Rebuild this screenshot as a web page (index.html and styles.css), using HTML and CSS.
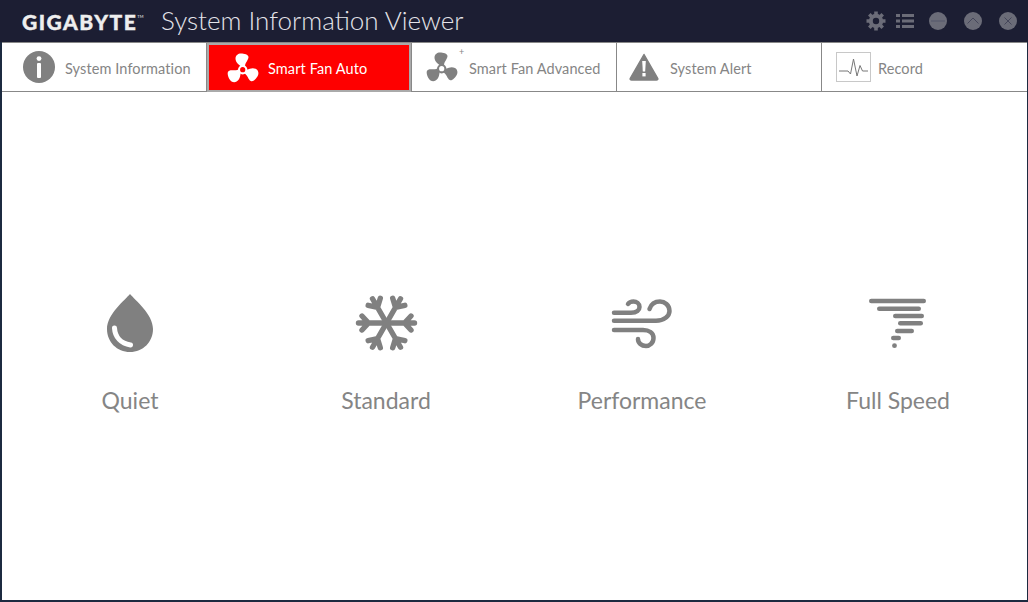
FILE: index.html
```html
<!DOCTYPE html>
<html lang="en">
<head>
  <meta charset="UTF-8" />
  <title>System Information Viewer</title>
  <link rel="stylesheet" href="styles.css">
</head>
<body>
  <svg class="defs" width="0" height="0">
    <defs>
      <g id="fan">
        <path id="blade" d="M13.500 14C11 12 8.500 10 8.500 6.500C8.500 3.500 11 1.500 14 1.500C17 1.500 21.500 2.500 21.500 5C21.500 8 18.500 10 18 14Z"/>
        <use href="#blade" transform="rotate(120 15.700 17.700)"/>
        <use href="#blade" transform="rotate(240 15.700 17.700)"/>
        <path fill-rule="evenodd" d="M15.700 13A4.700 4.700 0 1 1 15.700 22.400A4.700 4.700 0 1 1 15.700 13ZM15.700 15.100A2.600 2.600 0 1 0 15.700 20.300A2.600 2.600 0 1 0 15.700 15.100Z"/>
      </g>
    </defs>
  </svg>

  <div class="window">
    <!-- title bar -->
    <header class="titlebar">
      <span class="logo">GIGABYTE<sup>TM</sup></span>
      <span class="app-name">System Information Viewer</span>
      <div class="win-tools">
        <svg class="tool-gear" width="20" height="20" viewBox="0 0 20 20">
          <circle cx="10" cy="10" r="5.200" fill="none" stroke="#6b6c78" stroke-width="4"/>
          <g stroke="#6b6c78" stroke-width="3.600">
            <path d="M10 0.500V5M10 15V19.500M0.500 10H5M15 10H19.500M3.300 3.300L6.400 6.400M13.600 13.600L16.700 16.700M16.700 3.300L13.600 6.400M6.400 13.600L3.300 16.700"/>
          </g>
        </svg>
        <svg class="tool-list" width="18" height="16" viewBox="0 0 18 16" fill="#6b6c78">
          <rect x="0" y="1" width="4" height="3"/><rect x="6" y="1" width="12" height="3"/>
          <rect x="0" y="6.500" width="4" height="3"/><rect x="6" y="6.500" width="12" height="3"/>
          <rect x="0" y="12" width="4" height="3"/><rect x="6" y="12" width="12" height="3"/>
        </svg>
        <svg class="tool-btn" width="18" height="18" viewBox="0 0 18 18">
          <circle cx="9" cy="9" r="9" fill="#6b6c78"/>
          <path d="M2 9H16" stroke="#55566a" stroke-width="1"/>
        </svg>
        <svg class="tool-btn" width="18" height="18" viewBox="0 0 18 18">
          <circle cx="9" cy="9" r="9" fill="#6b6c78"/>
          <path d="M3.500 11.500L9 6L14.500 11.500" fill="none" stroke="#45465a" stroke-width="1"/>
        </svg>
        <svg class="tool-btn" width="18" height="18" viewBox="0 0 18 18">
          <circle cx="9" cy="9" r="9" fill="#6b6c78"/>
          <path d="M5.500 5.500L12.500 12.500M12.500 5.500L5.500 12.500" stroke="#45465a" stroke-width="1"/>
        </svg>
      </div>
    </header>

    <!-- tabs -->
    <nav class="tabs">
      <div class="tab tab-info">
        <svg width="32" height="32" viewBox="0 0 32 32">
          <circle cx="16" cy="16" r="16" fill="#808080"/>
          <circle cx="16" cy="7.600" r="2.400" fill="#fff"/>
          <rect x="14" y="12" width="4" height="15" rx="1" fill="#fff"/>
        </svg>
        <span>System Information</span>
      </div>
      <div class="tab tab-auto active">
        <svg width="32" height="32" viewBox="0 0 32 32" fill="#fff"><use href="#fan"/></svg>
        <span>Smart Fan Auto</span>
      </div>
      <div class="tab tab-adv">
        <svg width="32" height="32" viewBox="0 0 32 32" fill="#808080"><use href="#fan"/></svg>
        <span class="plus">+</span>
        <span>Smart Fan Advanced</span>
      </div>
      <div class="tab tab-alert">
        <svg width="30" height="28" viewBox="0 0 30 28">
          <path d="M15 1.500L28.800 25.500Q29 27 27.500 27H2.500Q1 27 1.200 25.500Z" fill="#808080" stroke="#808080" stroke-width="1.500" stroke-linejoin="round"/>
          <path d="M13.200 8H16.800L16.200 18.500H13.800Z" fill="#fff"/>
          <rect x="13.400" y="20" width="3.200" height="3.400" fill="#fff"/>
        </svg>
        <span>System Alert</span>
      </div>
      <div class="tab tab-record">
        <svg width="35" height="30" viewBox="0 0 35 30">
          <rect x=".5" y=".5" width="34" height="29" fill="#fff" stroke="#c8c8c8"/>
          <path d="M3 19H12L14.500 22L17.500 7L21 24L24 13.500L26.500 19H32" fill="none" stroke="#777" stroke-width="1"/>
        </svg>
        <span>Record</span>
      </div>
    </nav>

    <!-- fan modes -->
    <main class="modes">
      <div class="mode">
        <svg width="64" height="64" viewBox="0 0 64 64">
          <path d="M32 1C37 7 55 21 55 36C55 49 45 59 32 59C19 59 9 49 9 36C9 21 27 7 32 1Z" fill="#808080"/>
          <path d="M16.500 35C17 44 23 50.500 32.500 52" fill="none" stroke="#fff" stroke-width="5" stroke-linecap="round"/>
        </svg>
        <span>Quiet</span>
      </div>
      <div class="mode">
        <svg width="64" height="64" viewBox="0 0 64 64" fill="none" stroke="#808080" stroke-width="5.400" stroke-linecap="round">
          <g id="arm">
            <path d="M32.500 30H60.500M50.500 30L57 23M50.500 30L57 37"/>
          </g>
          <use href="#arm" transform="rotate(60 32.500 30)"/>
          <use href="#arm" transform="rotate(120 32.500 30)"/>
          <use href="#arm" transform="rotate(180 32.500 30)"/>
          <use href="#arm" transform="rotate(240 32.500 30)"/>
          <use href="#arm" transform="rotate(300 32.500 30)"/>
        </svg>
        <span>Standard</span>
      </div>
      <div class="mode">
        <svg width="64" height="64" viewBox="0 0 64 64" fill="none" stroke="#808080" stroke-width="4.500" stroke-linecap="round">
          <path d="M4 19.700H21C27 19.700 29.500 17 29.500 14C29.500 10.500 26.500 8.500 23.500 8.500C21 8.500 19 9.500 18 11"/>
          <path d="M4 27.700H46C54 27.700 59.500 23 59.500 18C59.500 12 54.500 8.500 50 8.500C45 8.500 41 11.500 39.500 16"/>
          <path d="M4 37H33C39 37 43.500 40 43.500 45C43.500 50 39.500 53 36 53C31.500 53 28 50 28 46"/>
        </svg>
        <span>Performance</span>
      </div>
      <div class="mode">
        <svg width="64" height="64" viewBox="0 0 64 64" fill="none" stroke="#808080" stroke-width="4.500" stroke-linecap="round">
          <path d="M5.250 8H57.750"/>
          <path d="M13.250 15.700H52.750"/>
          <path d="M29.250 23H55.750"/>
          <path d="M34.250 30.300H54.750"/>
          <path d="M31.250 38H45.750"/>
          <path d="M27.250 45H32.750"/>
          <circle cx="28.500" cy="52.700" r="2.400" fill="#808080" stroke="none"/>
        </svg>
        <span>Full Speed</span>
      </div>
    </main>
  </div>
</body>
</html>
```

FILE: styles.css
```css
* {
  box-sizing: border-box;
}
html, body {
  margin: 0;
  padding: 0;
  height: 100%;
  overflow: hidden;
}
body {
  font-family: 'Lato', 'Open Sans', sans-serif;
  background: #fff;
  color: #858585;
}
.defs {
  display: block;
  height: 0;
}
.window {
  height: 602px;
  display: flex;
  flex-direction: column;
  border-left: 2px solid #1c2a40;
  border-right: 1px solid #1c2a40;
  border-bottom: 2px solid #1c2a40;
}
.titlebar {
  height: 42px;
  margin-left: -2px;
  margin-right: -1px;
  padding-left: 22px;
  flex: none;
  display: flex;
  align-items: center;
  background: #1c1e33;
}
.logo {
  width: 139px;
  font-size: 21px;
  font-weight: 900;
  color: #eee;
  letter-spacing: 1.5px;
  -webkit-text-stroke: 0.4px #eee;
  flex: none;
}
.logo sup {
  font-size: 4px;
  font-weight: 400;
  letter-spacing: 0;
  vertical-align: 12px;
  -webkit-text-stroke: 0;
}
.app-name {
  font-size: 26px;
  font-weight: 300;
  color: #e4e4ea;
  margin-top: -2px;
}
.win-tools {
  margin-left: auto;
  display: flex;
  align-items: center;
  padding-right: 11px;
}
.tool-gear {
  margin-right: 10px;
}
.tool-list {
  margin-right: 15px;
}
.tool-btn {
  margin-left: 17px;
}
.tool-list + .tool-btn {
  margin-left: 0;
}
.tabs {
  height: 50px;
  flex: none;
  display: flex;
  border-top: 1px solid #888;
  border-bottom: 1px solid #888;
}
.tab {
  position: relative;
  width: 205px;
  flex: none;
  display: flex;
  align-items: center;
  font-size: 14.5px;
  letter-spacing: 0.1px;
  border-right: 1px solid #888;
}
.tab span {
  padding-top: 2px;
}
.tab:last-child {
  flex: 1;
  border-right: none;
}
.tab-info { padding-left: 21px; gap: 10px; }
.tab-auto { padding-left: 18px; gap: 9px; }
.tab-adv { padding-left: 14px; gap: 11px; }
.tab-alert { padding-left: 12px; gap: 11px; }
.tab-record { padding-left: 14px; gap: 7px; }
.tab.active {
  width: 204px;
  background: #fe0000;
  color: #fff;
  border: 2px solid #aaa;
  margin-bottom: -1px;
}
.tab-adv {
  width: 206px;
  border-left: 1px solid #888;
}
.plus {
  position: absolute;
  left: 47px;
  top: 1px;
  font-size: 9px;
}
.modes {
  display: flex;
  padding-top: 201px;
}
.mode {
  width: 256px;
  display: flex;
  flex-direction: column;
  align-items: center;
  gap: 29px;
  font-size: 23px;
}
```
